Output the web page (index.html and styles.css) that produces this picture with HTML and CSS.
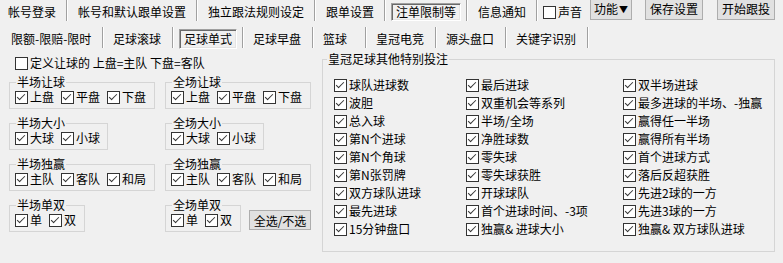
FILE: index.html
```html
<!DOCTYPE html>
<html lang="zh-CN">
<head>
    <meta charset="UTF-8">
    <title>跟单设置</title>
    <link rel="stylesheet" href="styles.css">
</head>
<body>
    <div class="bar bar-main">
        <span class="tab first">帐号登录</span><i class="sep"></i>
        <span class="tab">帐号和默认跟单设置</span><i class="sep"></i>
        <span class="tab">独立跟法规则设定</span><i class="sep"></i>
        <span class="tab">跟单设置</span><i class="sep"></i>
        <span class="tab active">注单限制等</span><i class="sep"></i>
        <span class="tab">信息通知</span><i class="sep"></i>
        <span class="cb sound"><span class="box"></span>声音</span>
        <button class="btn btn-func">功能<span class="arrow">▼</span></button>
        <button class="btn btn-save">保存设置</button>
        <button class="btn btn-start">开始跟投</button>
    </div>

    <div class="bar bar-sub">
        <span class="tab first">限额-限赔-限时</span><i class="sep"></i>
        <span class="tab">足球滚球</span><i class="sep"></i>
        <span class="tab active">足球单式</span><i class="sep"></i>
        <span class="tab">足球早盘</span><i class="sep"></i>
        <span class="tab basket">篮球</span><i class="sep"></i>
        <span class="tab">皇冠电竞</span><i class="sep"></i>
        <span class="tab">源头盘口</span><i class="sep"></i>
        <span class="tab">关键字识别</span><i class="sep"></i>
    </div>

    <div class="main">
        <div class="left">
            <div class="define"><span class="cb"><span class="box"></span>定义让球的 上盘=主队 下盘=客队</span></div>
            <div class="groups">
                <fieldset class="grp w3">
                    <legend>半场让球</legend>
                    <div class="row">
                        <span class="cb"><span class="box on"></span>上盘</span>
                        <span class="cb"><span class="box on"></span>平盘</span>
                        <span class="cb"><span class="box on"></span>下盘</span>
                    </div>
                </fieldset>
                <fieldset class="grp w3">
                    <legend>全场让球</legend>
                    <div class="row">
                        <span class="cb"><span class="box on"></span>上盘</span>
                        <span class="cb"><span class="box on"></span>平盘</span>
                        <span class="cb"><span class="box on"></span>下盘</span>
                    </div>
                </fieldset>

                <fieldset class="grp w2">
                    <legend>半场大小</legend>
                    <div class="row">
                        <span class="cb"><span class="box on"></span>大球</span>
                        <span class="cb"><span class="box on"></span>小球</span>
                    </div>
                </fieldset>
                <fieldset class="grp w2">
                    <legend>全场大小</legend>
                    <div class="row">
                        <span class="cb"><span class="box on"></span>大球</span>
                        <span class="cb"><span class="box on"></span>小球</span>
                    </div>
                </fieldset>

                <fieldset class="grp w3">
                    <legend>半场独赢</legend>
                    <div class="row">
                        <span class="cb"><span class="box on"></span>主队</span>
                        <span class="cb"><span class="box on"></span>客队</span>
                        <span class="cb"><span class="box on"></span>和局</span>
                    </div>
                </fieldset>
                <fieldset class="grp w3">
                    <legend>全场独赢</legend>
                    <div class="row">
                        <span class="cb"><span class="box on"></span>主队</span>
                        <span class="cb"><span class="box on"></span>客队</span>
                        <span class="cb"><span class="box on"></span>和局</span>
                    </div>
                </fieldset>

                <fieldset class="grp w1">
                    <legend>半场单双</legend>
                    <div class="row">
                        <span class="cb"><span class="box on"></span>单</span>
                        <span class="cb"><span class="box on"></span>双</span>
                    </div>
                </fieldset>
                <div class="pair">
                    <fieldset class="grp w1">
                        <legend>全场单双</legend>
                        <div class="row">
                            <span class="cb"><span class="box on"></span>单</span>
                            <span class="cb"><span class="box on"></span>双</span>
                        </div>
                    </fieldset>
                    <button class="btn btn-all">全选/不选</button>
                </div>
            </div>
        </div>

        <fieldset class="special">
            <legend>皇冠足球其他特别投注</legend>
            <div class="list">
                <span class="cb"><span class="box on"></span>球队进球数</span>
                <span class="cb"><span class="box on"></span>波胆</span>
                <span class="cb"><span class="box on"></span>总入球</span>
                <span class="cb"><span class="box on"></span>第N个进球</span>
                <span class="cb"><span class="box on"></span>第N个角球</span>
                <span class="cb"><span class="box on"></span>第N张罚牌</span>
                <span class="cb"><span class="box on"></span>双方球队进球</span>
                <span class="cb"><span class="box on"></span>最先进球</span>
                <span class="cb"><span class="box on"></span>15分钟盘口</span>

                <span class="cb"><span class="box on"></span>最后进球</span>
                <span class="cb"><span class="box on"></span>双重机会等系列</span>
                <span class="cb"><span class="box on"></span>半场/全场</span>
                <span class="cb"><span class="box on"></span>净胜球数</span>
                <span class="cb"><span class="box on"></span>零失球</span>
                <span class="cb"><span class="box on"></span>零失球获胜</span>
                <span class="cb"><span class="box on"></span>开球球队</span>
                <span class="cb"><span class="box on"></span>首个进球时间、-3项</span>
                <span class="cb"><span class="box on"></span>独赢&amp; 进球大小</span>

                <span class="cb"><span class="box on"></span>双半场进球</span>
                <span class="cb"><span class="box on"></span>最多进球的半场、-独赢</span>
                <span class="cb"><span class="box on"></span>赢得任一半场</span>
                <span class="cb"><span class="box on"></span>赢得所有半场</span>
                <span class="cb"><span class="box on"></span>首个进球方式</span>
                <span class="cb"><span class="box on"></span>落后反超获胜</span>
                <span class="cb"><span class="box on"></span>先进2球的一方</span>
                <span class="cb"><span class="box on"></span>先进3球的一方</span>
                <span class="cb"><span class="box on"></span>独赢&amp; 双方球队进球</span>
            </div>
        </fieldset>
    </div>
</body>
</html>
```

FILE: styles.css
```css
body {
    margin: 0;
    width: 783px;
    height: 263px;
    overflow: hidden;
    background-color: #f0f0f0;
    color: #000;
    font-family: "Noto Sans CJK SC", sans-serif;
    font-size: 12px;
}

/* tab strips */
.bar {
    display: flex;
    align-items: center;
    height: 24px;
    white-space: nowrap;
}
.bar-sub {
    margin-top: 3px;
}
.tab {
    padding: 0 10px;
    line-height: 16px;
}
.tab.first {
    padding-left: 8px;
}
.bar-sub .tab {
    padding: 0 11px 0 9px;
}
.bar-sub .tab.first {
    width: 102px;
    box-sizing: border-box;
    padding-left: 11px;
}
.bar-sub .tab.basket {
    padding-right: 18px;
}
.bar .tab.active {
    margin: 0 5px;
    padding: 1px 4px;
    line-height: 14px;
    border: 1px solid;
    border-color: #a0a0a0 #fff #fff #a0a0a0;
    box-shadow: inset 1px 1px 0 #696969, inset -1px -1px 0 #e3e3e3;
}
.bar-sub .tab.active {
    padding: 2px 4px;
}
.sep {
    align-self: flex-start;
    width: 0;
    height: 21px;
    border-left: 1px solid #a0a0a0;
    border-right: 1px solid #fff;
}

/* buttons */
.btn {
    padding: 0;
    font: inherit;
    color: #000;
    background-color: #e1e1e1;
    border: 1px solid #adadad;
}
.bar .btn {
    align-self: flex-start;
    height: 23px;
    margin-top: -3px;
}
.btn-func {
    width: 42px;
    margin-left: 8px;
}
.arrow {
    font-size: 9px;
    margin-left: 1px;
    vertical-align: 1px;
}
.btn-save {
    width: 58px;
    margin-left: 13px;
}
.btn-start {
    width: 58px;
    margin-left: 14px;
}
.btn-all {
    width: 62px;
    height: 20px;
    margin: 0 0 2px 8px;
}

/* checkboxes */
.cb {
    display: inline-flex;
    align-items: center;
    gap: 2px;
    line-height: 16px;
    white-space: nowrap;
}
.sound {
    margin-left: 5px;
}
.box {
    position: relative;
    flex: none;
    width: 13px;
    height: 13px;
    box-sizing: border-box;
    border: 1px solid #333;
    background-color: #fff;
}
.box.on::after {
    content: "";
    position: absolute;
    left: 3px;
    top: 0;
    width: 3px;
    height: 7px;
    border: solid #333;
    border-width: 0 1px 1px 0;
    transform: rotate(45deg);
}

/* main area */
.main {
    display: flex;
    align-items: flex-start;
    padding-top: 1px;
}
.left {
    width: 322px;
    box-sizing: border-box;
    padding-left: 9px;
}
.define {
    display: flex;
    align-items: center;
    height: 22px;
    margin-left: 6px;
}
.groups {
    display: grid;
    grid-template-columns: 156px auto;
    row-gap: 7px;
    justify-items: start;
    margin-top: 1px;
}
fieldset {
    margin: 0;
    min-width: 0;
    box-sizing: border-box;
    border: 1px solid #d5d5d5;
}
legend {
    padding: 0 1px;
    line-height: 14px;
}
.grp {
    padding: 0 0 3px 5px;
}
.grp legend {
    margin-left: 1px;
}
.w3 {
    width: 146px;
}
.w2 {
    width: 99px;
}
.w1 {
    width: 76px;
}
.row {
    display: flex;
    align-items: center;
    gap: 7px;
    height: 16px;
}
.pair {
    display: flex;
    align-items: flex-end;
}

.special {
    width: 453px;
    padding: 10px 0 13px 11px;
}
.special legend {
    margin-left: -7px;
}
.list {
    display: grid;
    grid-template-columns: 132px 157px 1fr;
    grid-template-rows: repeat(9, 18px);
    grid-auto-flow: column;
    align-items: center;
}
```
